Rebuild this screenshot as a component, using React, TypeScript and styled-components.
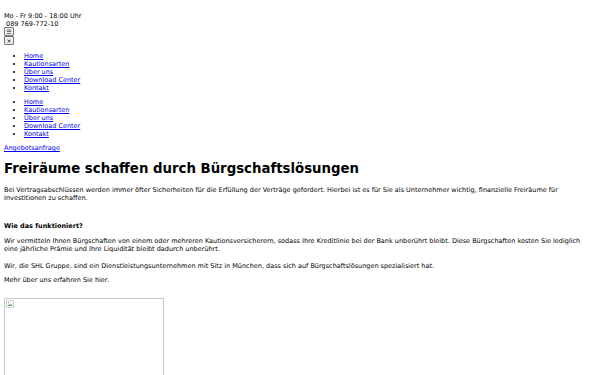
import React from "react";
import styled, { createGlobalStyle } from "styled-components";

const GlobalStyle = createGlobalStyle`
  body {
    margin: 4px;
    background: #ffffff;
    color: #000000;
    font-family: "DejaVu Sans", "Liberation Sans", sans-serif;
    font-size: 6.5px;
  }
  a {
    color: #0000ee;
  }
`;

const navItems = ["Home", "Kautionsarten", "Über uns", "Download Center", "Kontakt"];

function App() {
  return (
    <>
      <GlobalStyle />
      <Header>
        <Info>
          <div>Mo - Fr 9:00 - 18:00 Uhr</div>
          <div>&nbsp;089 769-772-10</div>
        </Info>
        <ToggleButton>☰</ToggleButton>
        <ToggleButton>×</ToggleButton>
        <NavList>
          {navItems.map((item) => (
            <li key={item}>
              <a href="#">{item}</a>
            </li>
          ))}
        </NavList>
        <NavList>
          {navItems.map((item) => (
            <li key={item + "2"}>
              <a href="#">{item}</a>
            </li>
          ))}
        </NavList>
        <Text $top={6}>
          <a href="#">Angebotsanfrage</a>
        </Text>
      </Header>

      <Main>
        <Title>Freiräume schaffen durch Bürgschaftslösungen</Title>
        <Text>
          Bei Vertragsabschlüssen werden immer öfter Sicherheiten für die Erfüllung der Verträge gefordert. Hierbei ist es für Sie als Unternehmer wichtig, finanzielle Freiräume für Investitionen zu schaffen.
        </Text>
        <SubTitle>Wie das funktioniert?</SubTitle>
        <Text>
          Wir vermitteln Ihnen Bürgschaften von einem oder mehreren Kautionsversicherern, sodass Ihre Kreditlinie bei der Bank unberührt bleibt. Diese Bürgschaften kosten Sie lediglich eine jährliche Prämie und Ihre Liquidität bleibt dadurch unberührt.
        </Text>
        <Text $top={9}>
          Wir, die SHL Gruppe, sind ein Dienstleistungsunternehmen mit Sitz in München, dass sich auf Bürgschaftslösungen spezialisiert hat.
        </Text>
        <Text $top={5.5}>Mehr über uns erfahren Sie hier.</Text>
        <ImageBox>
          <svg width="8" height="8" viewBox="0 0 16 16">
            <rect x="1.5" y="1.5" width="13" height="13" fill="#fff" stroke="#9a9a9a" />
            <path d="M3 12 L6 8 L8 10 L10 7 L13 12 Z" fill="#6bb36b" />
            <circle cx="5" cy="5" r="1.5" fill="#6b9bd6" />
          </svg>
        </ImageBox>
      </Main>
    </>
  );
}

const Header = styled.header`
  display: block;
`;

const Info = styled.div`
  margin: 8px 0 -1px;
  line-height: 8px;
`;

const ToggleButton = styled.button`
  display: block;
  width: 10px;
  height: 9px;
  padding: 0;
  font-family: "DejaVu Sans", sans-serif;
  font-size: 6px;
  line-height: 7px;
  background: #efefef;
  border: 1px solid #767676;
  border-radius: 1px;
  color: #000;
`;

const NavList = styled.ul`
  margin: 6.5px 0 6px;
  padding-left: 20px;
  line-height: 8px;
`;

const Main = styled.main`
  display: block;
`;

const Title = styled.h1`
  margin: 9.2px 0 9.2px;
  font-size: 13.3px;
  line-height: 16px;
`;

const SubTitle = styled.p`
  margin: 20px 0 6.5px;
  font-weight: bold;
  line-height: 8px;
`;

const Text = styled.p<{ $top?: number }>`
  margin: ${(p) => (p.$top ? `${p.$top}px` : "6.5px")} 0 6.5px;
  line-height: 8px;
`;

const ImageBox = styled.div`
  width: 160px;
  height: 120px;
  margin-top: 14px;
  padding: 1px;
  border: 1px solid #c8c8c8;
  box-sizing: border-box;
`;

export default App;
